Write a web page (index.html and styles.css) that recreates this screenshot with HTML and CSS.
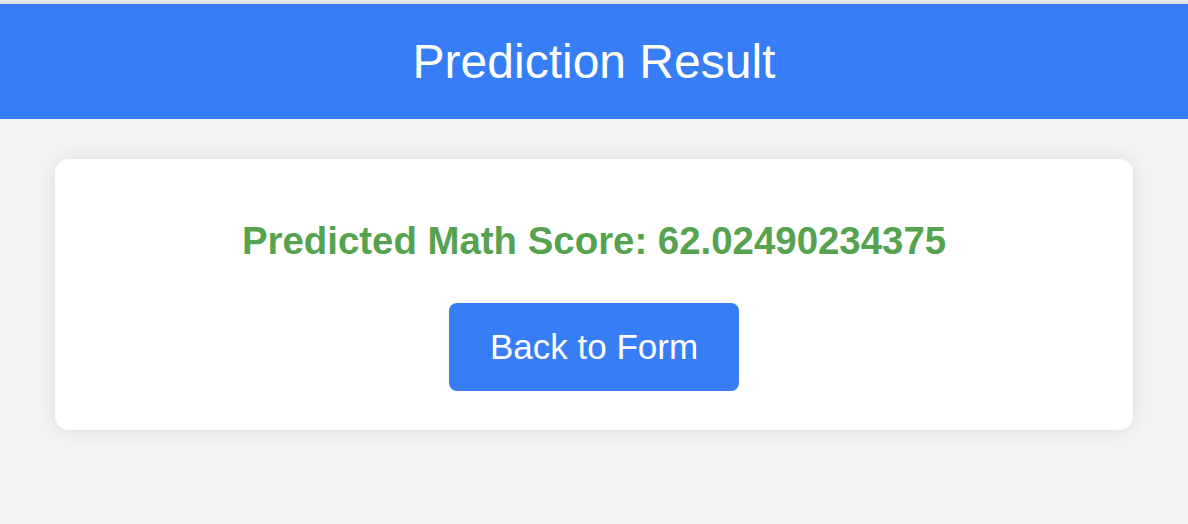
FILE: index.html
```html
<!DOCTYPE html>
<html>
<head>
<meta charset="utf-8">
<title>Prediction Result</title>
<link rel="stylesheet" href="styles.css">
</head>
<body>
<div class="topline"></div>
<header class="header">
  <h1 class="title">Prediction Result</h1>
</header>
<main class="main">
  <section class="card">
    <h2 class="score">Predicted Math Score: 62.02490234375</h2>
    <a class="button" href="#">Back to Form</a>
  </section>
</main>
</body>
</html>
```
FILE: styles.css
```css
html, body {
  margin: 0;
  padding: 0;
}
body {
  background: #f4f4f4;
  font-family: "Liberation Sans", Arial, sans-serif;
}
.topline {
  height: 4px;
  background: linear-gradient(#e9ebee, #d9dde2);
}
.header {
  background: #377ef6;
  height: 115px;
  display: flex;
  align-items: center;
  justify-content: center;
}
.title {
  margin: 0;
  color: #ffffff;
  font-weight: normal;
  font-size: 48px;
  line-height: 1;
}
.main {
  padding: 40px 55px;
}
.card {
  background: #ffffff;
  border-radius: 14px;
  box-shadow: 0 0 22px rgba(0, 0, 0, 0.1);
  display: flex;
  flex-direction: column;
  align-items: center;
  padding: 62px 20px 39px;
}
.score {
  margin: 0 0 42px;
  color: #55a24f;
  font-weight: bold;
  font-size: 38.4px;
  line-height: 40px;
}
.button {
  display: flex;
  align-items: center;
  justify-content: center;
  width: 290px;
  height: 88px;
  background: #377ef6;
  color: #ffffff;
  border-radius: 8px;
  text-decoration: none;
  font-size: 35px;
}
```
